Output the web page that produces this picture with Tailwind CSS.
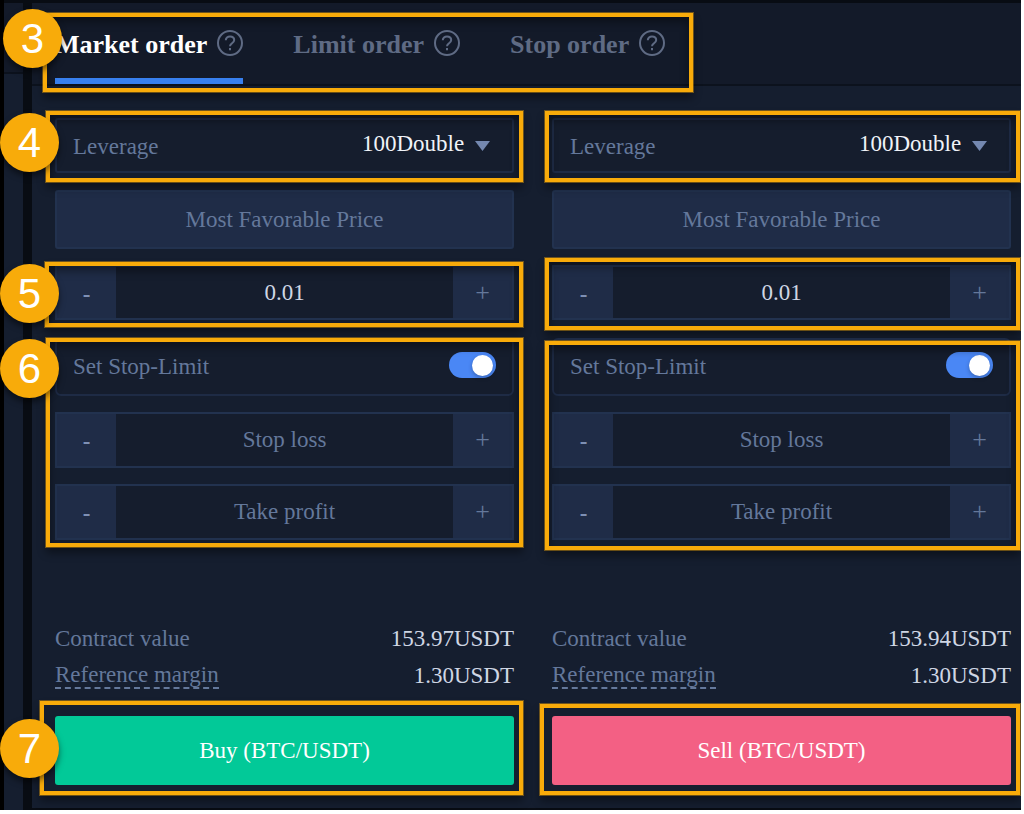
<!DOCTYPE html>
<html lang="en">
<head>
<meta charset="utf-8">
<meta name="viewport" content="width=device-width, initial-scale=1">
<title>Futures order form</title>
<script src="https://cdn.jsdelivr.net/npm/@tailwindcss/browser@4"></script>
</head>
<body class="bg-white">
<div class="flex min-h-screen overflow-hidden bg-white pr-[3px] pb-1 font-['Liberation_Serif',serif] text-[23px] leading-7 text-[#64789b]">
  <div class="flex min-w-0 flex-1 overflow-hidden bg-[#080c13] pt-[3px] pl-1 shadow-[inset_4px_0_0_#000000]">

    <!-- edge of the neighbouring panel -->
    <aside class="flex w-[19px] shrink-0 flex-col bg-[#151e2f]">
      <div class="h-[71px] border-b-2 border-[#0c121d] bg-[#131a29]"></div>
    </aside>

    <main class="mb-[2px] ml-[9px] min-w-0 flex-1 bg-[#151e2f]">
      <header class="relative border-b-2 border-[#0c121d] bg-[#131a29] pl-[23px]">
        <nav class="flex h-[81px] gap-[50px] text-[26px] font-bold text-[#5f6b84]">
          <button type="button" class="flex items-center gap-[10px] border-b-6 border-[#3880ee] pt-2 whitespace-nowrap text-white">Market order
            <svg class="mb-1 size-[26px] text-[#5f6b84]" viewBox="0 0 26 26" fill="none" stroke="currentColor" stroke-width="2"><circle cx="13" cy="13" r="12"/><path d="M8.8 10.3c0-2.4 1.8-3.8 4.2-3.8s4.2 1.4 4.2 3.6c0 3.2-4.2 3.2-4.2 6.2"/><path d="M13 18v2.2"/></svg>
          </button>
          <button type="button" class="flex items-center gap-[10px] border-b-6 border-transparent pt-2 whitespace-nowrap">Limit order
            <svg class="mb-1 size-[26px]" viewBox="0 0 26 26" fill="none" stroke="currentColor" stroke-width="2"><circle cx="13" cy="13" r="12"/><path d="M8.8 10.3c0-2.4 1.8-3.8 4.2-3.8s4.2 1.4 4.2 3.6c0 3.2-4.2 3.2-4.2 6.2"/><path d="M13 18v2.2"/></svg>
          </button>
          <button type="button" class="flex items-center gap-[10px] border-b-6 border-transparent pt-2 whitespace-nowrap">Stop order
            <svg class="mb-1 size-[26px]" viewBox="0 0 26 26" fill="none" stroke="currentColor" stroke-width="2"><circle cx="13" cy="13" r="12"/><path d="M8.8 10.3c0-2.4 1.8-3.8 4.2-3.8s4.2 1.4 4.2 3.6c0 3.2-4.2 3.2-4.2 6.2"/><path d="M13 18v2.2"/></svg>
          </button>
        </nav>
        <div class="pointer-events-none absolute top-[10px] left-[11px] h-[79px] w-[650px] border-4 border-[#f8ab0a] shadow-[0_0_0_1px_#f8ab0a66,0_6px_8px_#00000066,inset_0_5px_8px_#00000066]"></div>
        <div class="absolute top-[6px] -left-[29px] flex size-[59px] items-center justify-center rounded-full bg-[#f8ab0a] font-['Liberation_Sans',sans-serif] text-[42px] text-white shadow-[0_4px_6px_#00000080]">3</div>
      </header>

      <div class="grid grid-cols-2 gap-[38px] pt-8 pr-[10px] pb-[23px] pl-[23px]">

        <form class="min-w-0">
          <div class="relative">
            <div class="flex h-[55px] items-center justify-between rounded-[3px] border-2 border-[#1e2b45] bg-[#151d2d] px-4">
              <label for="lev-buy" class="pt-[2px]">Leverage</label>
              <span class="flex items-center gap-[10px] pr-[6px]">
                <select id="lev-buy" class="appearance-none bg-transparent pb-1 text-[#f0f3f8]"><option>100Double</option></select>
                <svg class="h-[10px] w-[15px]" viewBox="0 0 15 10" fill="#7488b0"><path d="M0 0h15L7.5 10z"/></svg>
              </span>
            </div>
            <div class="pointer-events-none absolute -top-[7px] -right-[9px] -bottom-[9px] -left-[9px] border-4 border-[#f8ab0a] shadow-[0_0_0_1px_#f8ab0a66,0_6px_8px_#00000066,inset_0_5px_8px_#00000066]"></div>
            <div class="absolute -top-[5px] -left-[55px] flex size-[59px] items-center justify-center rounded-full bg-[#f8ab0a] font-['Liberation_Sans',sans-serif] text-[42px] text-white shadow-[0_4px_6px_#00000080]">4</div>
          </div>

          <button type="button" class="mt-[17px] flex h-[59px] w-full items-center justify-center rounded-[3px] border-2 border-[#22324f] bg-[#1f2c47]">Most Favorable Price</button>

          <div class="relative mt-4">
            <div class="flex h-[55px] border-2 border-[#22324f] bg-[#151d2d]">
              <button type="button" aria-label="Decrease amount" class="w-[59px] shrink-0 bg-[#1f2c47] pt-1 font-bold text-[#7e90b4]">-</button>
              <input type="text" aria-label="Amount" value="0.01" class="min-w-0 flex-1 bg-transparent text-center text-[#cfd6e4]">
              <button type="button" aria-label="Increase amount" class="w-[59px] shrink-0 bg-[#1f2c47] text-[26px]">+</button>
            </div>
            <div class="pointer-events-none absolute -top-[3px] -right-[9px] -bottom-[7px] -left-[10px] border-4 border-[#f8ab0a] shadow-[0_0_0_1px_#f8ab0a66,0_6px_8px_#00000066,inset_0_5px_8px_#00000066]"></div>
            <div class="absolute -top-[1px] -left-[55px] flex size-[59px] items-center justify-center rounded-full bg-[#f8ab0a] font-['Liberation_Sans',sans-serif] text-[42px] text-white shadow-[0_4px_6px_#00000080]">5</div>
          </div>

          <div class="relative mt-[18px] flex flex-col gap-4">
            <div class="flex h-[58px] items-center justify-between rounded-[6px] border-2 border-[#1e2b45] bg-[#151d2d] px-4">
              <label for="sl-buy">Set Stop-Limit</label>
              <input id="sl-buy" type="checkbox" role="switch" checked class="mb-1 flex h-[26px] w-[47px] appearance-none items-center justify-end rounded-full bg-[#4a87f5] px-[3px] before:size-[21px] before:rounded-full before:bg-white before:shadow-[0_2px_4px_#00000040] before:content-['']">
            </div>
            <div class="flex h-[56px] border-2 border-[#22324f] bg-[#151d2d]">
              <button type="button" aria-label="Decrease stop loss" class="w-[59px] shrink-0 bg-[#1f2c47] pt-1 font-bold text-[#7e90b4]">-</button>
              <input type="text" aria-label="Stop loss" placeholder="Stop loss" class="min-w-0 flex-1 bg-transparent text-center placeholder:text-[#64789b]">
              <button type="button" aria-label="Increase stop loss" class="w-[59px] shrink-0 bg-[#1f2c47] text-[26px]">+</button>
            </div>
            <div class="flex h-[56px] border-2 border-[#22324f] bg-[#151d2d]">
              <button type="button" aria-label="Decrease take profit" class="w-[59px] shrink-0 bg-[#1f2c47] pt-1 font-bold text-[#7e90b4]">-</button>
              <input type="text" aria-label="Take profit" placeholder="Take profit" class="min-w-0 flex-1 bg-transparent text-center placeholder:text-[#64789b]">
              <button type="button" aria-label="Increase take profit" class="w-[59px] shrink-0 bg-[#1f2c47] text-[26px]">+</button>
            </div>
            <div class="pointer-events-none absolute top-0 -right-[9px] -bottom-[7px] -left-[9px] border-4 border-[#f8ab0a] shadow-[0_0_0_1px_#f8ab0a66,0_6px_8px_#00000066,inset_0_5px_8px_#00000066]"></div>
            <div class="absolute top-[1px] -left-[55px] flex size-[59px] items-center justify-center rounded-full bg-[#f8ab0a] font-['Liberation_Sans',sans-serif] text-[42px] text-white shadow-[0_4px_6px_#00000080]">6</div>
          </div>

          <dl class="mt-20">
            <div class="flex h-[37px] items-center justify-between"><dt>Contract value</dt><dd class="text-[#cfd6e4]">153.97USDT</dd></div>
            <div class="flex h-[37px] items-center justify-between"><dt class="border-b-2 border-dashed border-[#64789b] leading-6">Reference margin</dt><dd class="text-[#cfd6e4]">1.30USDT</dd></div>
          </dl>

          <div class="relative mt-[22px]">
            <button type="button" class="flex h-[69px] w-full items-center justify-center rounded-[3px] bg-[#02c998] text-white">Buy (BTC/USDT)</button>
            <div class="pointer-events-none absolute -top-[15px] -right-[9px] -bottom-[10px] -left-[15px] border-4 border-[#f8ab0a] shadow-[0_0_0_1px_#f8ab0a66,0_6px_8px_#00000066]"></div>
            <div class="absolute top-[3px] -left-[55px] flex size-[59px] items-center justify-center rounded-full bg-[#f8ab0a] font-['Liberation_Sans',sans-serif] text-[42px] text-white shadow-[0_4px_6px_#00000080]">7</div>
          </div>
        </form>

        <form class="min-w-0">
          <div class="relative">
            <div class="flex h-[55px] items-center justify-between rounded-[3px] border-2 border-[#1e2b45] bg-[#151d2d] px-4">
              <label for="lev-sell" class="pt-[2px]">Leverage</label>
              <span class="flex items-center gap-[10px] pr-[6px]">
                <select id="lev-sell" class="appearance-none bg-transparent pb-1 text-[#f0f3f8]"><option>100Double</option></select>
                <svg class="h-[10px] w-[15px]" viewBox="0 0 15 10" fill="#7488b0"><path d="M0 0h15L7.5 10z"/></svg>
              </span>
            </div>
            <div class="pointer-events-none absolute -top-[7px] -right-[9px] -bottom-[9px] -left-[7px] border-4 border-[#f8ab0a] shadow-[0_0_0_1px_#f8ab0a66,0_6px_8px_#00000066,inset_0_5px_8px_#00000066]"></div>
          </div>

          <button type="button" class="mt-[17px] flex h-[59px] w-full items-center justify-center rounded-[3px] border-2 border-[#22324f] bg-[#1f2c47]">Most Favorable Price</button>

          <div class="relative mt-4">
            <div class="flex h-[55px] border-2 border-[#22324f] bg-[#151d2d]">
              <button type="button" aria-label="Decrease amount" class="w-[59px] shrink-0 bg-[#1f2c47] pt-1 font-bold text-[#7e90b4]">-</button>
              <input type="text" aria-label="Amount" value="0.01" class="min-w-0 flex-1 bg-transparent text-center text-[#cfd6e4]">
              <button type="button" aria-label="Increase amount" class="w-[59px] shrink-0 bg-[#1f2c47] text-[26px]">+</button>
            </div>
            <div class="pointer-events-none absolute -top-[7px] -right-[9px] -bottom-[10px] -left-[7px] border-4 border-[#f8ab0a] shadow-[0_0_0_1px_#f8ab0a66,0_6px_8px_#00000066,inset_0_5px_8px_#00000066]"></div>
          </div>

          <div class="relative mt-[18px] flex flex-col gap-4">
            <div class="flex h-[58px] items-center justify-between rounded-[6px] border-2 border-[#1e2b45] bg-[#151d2d] px-4">
              <label for="sl-sell">Set Stop-Limit</label>
              <input id="sl-sell" type="checkbox" role="switch" checked class="mb-1 flex h-[26px] w-[47px] appearance-none items-center justify-end rounded-full bg-[#4a87f5] px-[3px] before:size-[21px] before:rounded-full before:bg-white before:shadow-[0_2px_4px_#00000040] before:content-['']">
            </div>
            <div class="flex h-[56px] border-2 border-[#22324f] bg-[#151d2d]">
              <button type="button" aria-label="Decrease stop loss" class="w-[59px] shrink-0 bg-[#1f2c47] pt-1 font-bold text-[#7e90b4]">-</button>
              <input type="text" aria-label="Stop loss" placeholder="Stop loss" class="min-w-0 flex-1 bg-transparent text-center placeholder:text-[#64789b]">
              <button type="button" aria-label="Increase stop loss" class="w-[59px] shrink-0 bg-[#1f2c47] text-[26px]">+</button>
            </div>
            <div class="flex h-[56px] border-2 border-[#22324f] bg-[#151d2d]">
              <button type="button" aria-label="Decrease take profit" class="w-[59px] shrink-0 bg-[#1f2c47] pt-1 font-bold text-[#7e90b4]">-</button>
              <input type="text" aria-label="Take profit" placeholder="Take profit" class="min-w-0 flex-1 bg-transparent text-center placeholder:text-[#64789b]">
              <button type="button" aria-label="Increase take profit" class="w-[59px] shrink-0 bg-[#1f2c47] text-[26px]">+</button>
            </div>
            <div class="pointer-events-none absolute top-[3px] -right-[9px] -bottom-[10px] -left-[7px] border-4 border-[#f8ab0a] shadow-[0_0_0_1px_#f8ab0a66,0_6px_8px_#00000066,inset_0_5px_8px_#00000066]"></div>
          </div>

          <dl class="mt-20">
            <div class="flex h-[37px] items-center justify-between"><dt>Contract value</dt><dd class="text-[#cfd6e4]">153.94USDT</dd></div>
            <div class="flex h-[37px] items-center justify-between"><dt class="border-b-2 border-dashed border-[#64789b] leading-6">Reference margin</dt><dd class="text-[#cfd6e4]">1.30USDT</dd></div>
          </dl>

          <div class="relative mt-[22px]">
            <button type="button" class="flex h-[69px] w-full items-center justify-center rounded-[3px] bg-[#f36084] text-white">Sell (BTC/USDT)</button>
            <div class="pointer-events-none absolute -top-[12px] -right-[9px] -bottom-[10px] -left-[12px] border-4 border-[#f8ab0a] shadow-[0_0_0_1px_#f8ab0a66,0_6px_8px_#00000066]"></div>
          </div>
        </form>

      </div>
    </main>
  </div>
</div>
</body>
</html>
